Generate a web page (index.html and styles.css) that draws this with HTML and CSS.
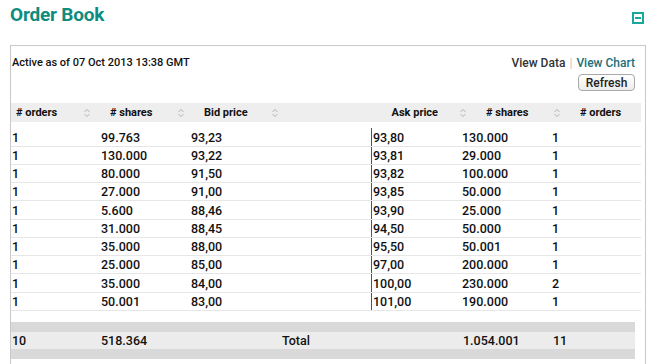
FILE: index.html
```html
<!DOCTYPE html>
<html lang="en">
<head>
    <meta charset="UTF-8">
    <meta name="viewport" content="width=device-width, initial-scale=1.0">
    <title>Order Book</title>
    <link rel="stylesheet" href="styles.css">
</head>
<body>
    <div class="title-bar">
        <h1>Order Book</h1>
        <span class="collapse-box"><span class="collapse-bar"></span></span>
    </div>

    <div class="panel">
        <div class="toolbar">
            <div class="stamp">Active as of 07 Oct 2013 13:38 GMT</div>
            <div class="actions">
                <div class="links">
                    <a class="link-data">View Data</a><span class="sep">|</span><a class="link-chart">View Chart</a>
                </div>
                <button class="refresh">Refresh</button>
            </div>
        </div>

        <div class="head-row">
            <div class="th th-1"><span># orders</span><svg class="sort" viewBox="0 0 6 10"><path d="M0.6 4 L3 1.4 L5.4 4 M0.6 6 L3 8.6 L5.4 6"/></svg></div>
            <div class="th th-2"><span># shares</span><svg class="sort" viewBox="0 0 6 10"><path d="M0.6 4 L3 1.4 L5.4 4 M0.6 6 L3 8.6 L5.4 6"/></svg></div>
            <div class="th th-3"><span>Bid price</span><svg class="sort" viewBox="0 0 6 10"><path d="M0.6 4 L3 1.4 L5.4 4 M0.6 6 L3 8.6 L5.4 6"/></svg></div>
            <div class="th th-4"><span>Ask price</span><svg class="sort" viewBox="0 0 6 10"><path d="M0.6 4 L3 1.4 L5.4 4 M0.6 6 L3 8.6 L5.4 6"/></svg></div>
            <div class="th th-5"><span># shares</span><svg class="sort" viewBox="0 0 6 10"><path d="M0.6 4 L3 1.4 L5.4 4 M0.6 6 L3 8.6 L5.4 6"/></svg></div>
            <div class="th th-6"><span># orders</span></div>
        </div>

        <div class="rows">
            <div class="row"><span>1</span><span>99.763</span><span>93,23</span><span class="ask">93,80</span><span>130.000</span><span>1</span></div>
            <div class="row"><span>1</span><span>130.000</span><span>93,22</span><span class="ask">93,81</span><span>29.000</span><span>1</span></div>
            <div class="row"><span>1</span><span>80.000</span><span>91,50</span><span class="ask">93,82</span><span>100.000</span><span>1</span></div>
            <div class="row"><span>1</span><span>27.000</span><span>91,00</span><span class="ask">93,85</span><span>50.000</span><span>1</span></div>
            <div class="row"><span>1</span><span>5.600</span><span>88,46</span><span class="ask">93,90</span><span>25.000</span><span>1</span></div>
            <div class="row"><span>1</span><span>31.000</span><span>88,45</span><span class="ask">94,50</span><span>50.000</span><span>1</span></div>
            <div class="row"><span>1</span><span>35.000</span><span>88,00</span><span class="ask">95,50</span><span>50.001</span><span>1</span></div>
            <div class="row"><span>1</span><span>25.000</span><span>85,00</span><span class="ask">97,00</span><span>200.000</span><span>1</span></div>
            <div class="row"><span>1</span><span>35.000</span><span>84,00</span><span class="ask">100,00</span><span>230.000</span><span>2</span></div>
            <div class="row"><span>1</span><span>50.001</span><span>83,00</span><span class="ask">101,00</span><span>190.000</span><span>1</span></div>
        </div>

        <div class="totals">
            <div class="totals-bar"></div>
            <div class="totals-row"><span>10</span><span>518.364</span><span class="total-label">Total</span><span>1.054.001</span><span>11</span></div>
            <div class="totals-bar"></div>
        </div>
    </div>
</body>
</html>
```

FILE: styles.css
```css
body {
    margin: 0;
    font-family: Roboto, "Liberation Sans", sans-serif;
    color: #111;
    background: #fff;
}
.title-bar {
    display: flex;
    justify-content: space-between;
    align-items: flex-start;
    padding: 4px 8px 0 10px;
    margin-bottom: 19px;
}
h1 {
    margin: 0;
    font-size: 19px;
    line-height: 22px;
    font-weight: 700;
    letter-spacing: -0.2px;
    color: #0e8c80;
}
.collapse-box {
    margin-top: 8px;
    width: 12px;
    height: 12px;
    box-sizing: border-box;
    border: 2px solid #1aa79c;
    display: flex;
    align-items: center;
    justify-content: center;
}
.collapse-bar {
    width: 6px;
    height: 2px;
    background: #1aa79c;
}
.panel {
    margin-left: 10px;
    width: 636px;
    min-height: 319px;
    box-sizing: border-box;
    border: 1px solid #c9c9c9;
    border-bottom: none;
}
.toolbar {
    display: flex;
    justify-content: space-between;
    padding: 10px 10px 0 1px;
}
.stamp {
    font-size: 11px;
    line-height: 14px;
    font-weight: 500;
}
.actions {
    display: flex;
    flex-direction: column;
    align-items: flex-end;
}
.links {
    font-size: 12px;
    line-height: 14px;
    font-weight: 500;
}
.link-data {
    color: #333;
}
.link-chart {
    color: #23707a;
}
.sep {
    color: #c8c8c8;
    margin: 0 4px;
}
.refresh {
    margin-top: 4px;
    width: 57px;
    height: 17px;
    padding: 0;
    font-family: inherit;
    font-size: 12px;
    font-weight: 500;
    color: #222;
    border: 1px solid #a9a9a9;
    border-radius: 4px;
    background: linear-gradient(#ffffff, #ececec);
}
.head-row {
    display: flex;
    width: 630px;
    height: 19px;
    margin-top: 12px;
    background: #eeeeee;
    font-size: 11px;
    font-weight: 700;
}
.th {
    display: flex;
    align-items: center;
    justify-content: space-between;
    box-sizing: border-box;
    padding: 0 15px 0 5px;
    width: 94px;
}
.th-4 {
    width: 188px;
    justify-content: flex-end;
    gap: 22px;
}
.th-6 {
    width: 66px;
}
.sort {
    width: 6px;
    height: 10px;
}
.sort path {
    fill: none;
    stroke: #b3b3b3;
    stroke-width: 1;
}
.rows {
    margin-top: 6.4px;
    width: 630px;
}
.row {
    display: grid;
    grid-template-columns: 89px 90px 181px 90px 90px 90px;
    height: 18.26px;
    box-sizing: border-box;
    border-bottom: 1px solid #e6e6e6;
    font-size: 12.5px;
    font-weight: 500;
}
.row span {
    display: flex;
    align-items: center;
    padding-left: 1px;
}
.row .ask {
    border-left: 1px solid #555;
}
.totals {
    margin-top: 11px;
    width: 624px;
}
.totals-bar {
    height: 10px;
    background: #d9d9d9;
}
.totals-row {
    display: grid;
    grid-template-columns: 89px 90px 272px 90px 83px;
    height: 17px;
    background: #ececec;
    font-size: 12.5px;
    font-weight: 500;
}
.totals-row span {
    display: flex;
    align-items: center;
    padding-left: 1px;
}
.totals-row .total-label {
    padding-left: 92px;
}
```
